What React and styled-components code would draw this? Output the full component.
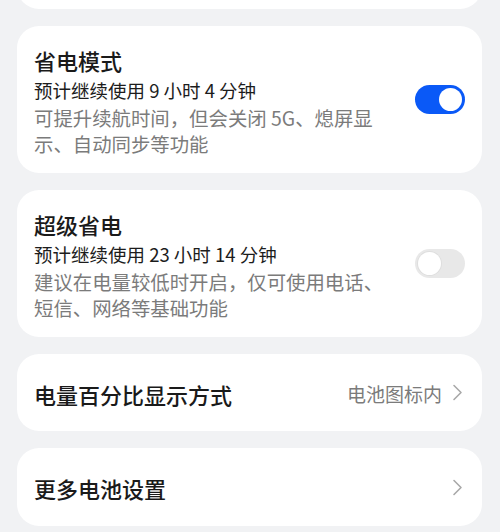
import styled, { createGlobalStyle } from "styled-components"

const GlobalStyle = createGlobalStyle`
  html, body {
    margin: 0;
    padding: 0;
    background: #f1f2f4;
  }
  body {
    font-family: "Noto Sans CJK SC", "Noto Sans", sans-serif;
    -webkit-font-smoothing: antialiased;
  }
`

const Page = styled.div`
  width: 500px;
  height: 532px;
  overflow: hidden;
  background: #f1f2f4;
  padding: 0 18px 0 17px;
  box-sizing: border-box;
  display: flex;
  flex-direction: column;
  gap: 17px;
`

const Card = styled.div`
  background: #ffffff;
  border-radius: 22px;
  box-sizing: border-box;
  flex-shrink: 0;
`

const CutCard = styled(Card)`
  height: 60px;
  margin-top: -51px;
`

const ToggleCard = styled(Card)`
  height: 147px;
  padding: 19px 17px 0 17px;
  display: flex;
  align-items: center;
  justify-content: space-between;
`

const TextBlock = styled.div`
  width: 362px;
  align-self: flex-start;
`

const Title = styled.div`
  font-size: 22px;
  line-height: 30px;
  color: #1a1a1a;
  font-weight: 500;
`

const Estimate = styled.div`
  font-size: 18.5px;
  line-height: 30px;
  color: #1c1c1c;
`

const Desc = styled.div`
  font-size: 19.4px;
  line-height: 26px;
  color: #7b7b7b;
`

const Track = styled.div`
  width: 50px;
  height: 29px;
  border-radius: 15px;
  background: ${(p) => (p.$on ? "#0a59f7" : "#e8e8e8")};
  display: flex;
  align-items: center;
  justify-content: ${(p) => (p.$on ? "flex-end" : "flex-start")};
  padding: 0 3px;
  box-sizing: border-box;
  margin-top: -19px;
  flex-shrink: 0;
`

const Knob = styled.div`
  width: 23px;
  height: 23px;
  border-radius: 50%;
  background: #ffffff;
  box-shadow: ${(p) => (p.$on ? "none" : "0 0 0 1px #dedede")};
`

const RowCard = styled(Card)`
  height: ${(p) => p.$h || 77}px;
  padding: 0 19px 0 17px;
  display: flex;
  align-items: center;
  gap: 10px;
`

const RowTitle = styled.div`
  flex: 1;
  font-size: 22px;
  color: #1a1a1a;
  font-weight: 500;
  padding-top: 2px;
`

const RowValue = styled.div`
  font-size: 19px;
  color: #7b7b7b;
  padding-top: 2px;
`

const Chevron = () => (
  <svg width="11" height="17" viewBox="0 0 11 17" fill="none">
    <path d="M2 1.5 L9 8.5 L2 15.5" stroke="#a9a9a9" strokeWidth="1.6" strokeLinecap="round" strokeLinejoin="round" />
  </svg>
)

function Switch({ on }) {
  return (
    <Track $on={on}>
      <Knob $on={on} />
    </Track>
  )
}

export default function App() {
  return (
    <>
      <GlobalStyle />
      <Page>
        <CutCard />
        <ToggleCard>
          <TextBlock>
            <Title>省电模式</Title>
            <Estimate>预计继续使用 9 小时 4 分钟</Estimate>
            <Desc>可提升续航时间，但会关闭 5G、熄屏显示、自动同步等功能</Desc>
          </TextBlock>
          <Switch on />
        </ToggleCard>
        <ToggleCard>
          <TextBlock>
            <Title>超级省电</Title>
            <Estimate>预计继续使用 23 小时 14 分钟</Estimate>
            <Desc>建议在电量较低时开启，仅可使用电话、短信、网络等基础功能</Desc>
          </TextBlock>
          <Switch />
        </ToggleCard>
        <RowCard $h={77}>
          <RowTitle>电量百分比显示方式</RowTitle>
          <RowValue>电池图标内</RowValue>
          <Chevron />
        </RowCard>
        <RowCard $h={78}>
          <RowTitle>更多电池设置</RowTitle>
          <Chevron />
        </RowCard>
      </Page>
    </>
  )
}
